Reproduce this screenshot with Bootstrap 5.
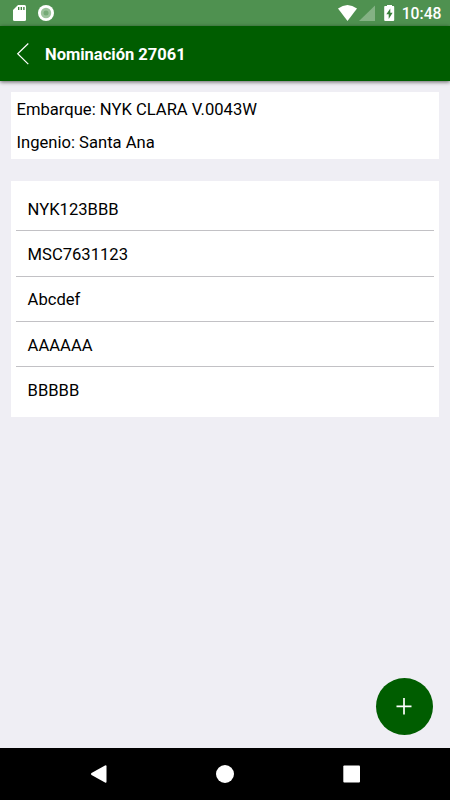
<!DOCTYPE html>
<html lang="es">
<head>
<meta charset="utf-8">
<meta name="viewport" content="width=device-width, initial-scale=1">
<title>Nominación 27061</title>
<link href="https://cdn.jsdelivr.net/npm/bootstrap@5.3.0/dist/css/bootstrap.min.css" rel="stylesheet">
<style>
body { font-family: Roboto, "Liberation Sans", sans-serif; font-size: 16.6px; line-height: 24px; color: #000; background: #efeef4; }
.screen { height: 800px; }
.status { height: 26px; background: #4f9150; color: #fff; }
.status-time { font-size: 15.7px; line-height: 28px; font-weight: 500; padding-right: 8.5px; }
.appbar { height: 55px; background: #005d00; color: #fff; box-shadow: 0 1px 4px rgba(0,0,0,.6); }
.title { font-size: 16.5px; font-weight: 700; line-height: 24px; padding-top: 2px; }
.content { padding: 11px; gap: 22px; }
.info { height: 67px; padding: 6px 5.5px; gap: 9.4px; }
.lines { height: 236px; padding: 5px 5.4px; }
.lines .list-group-item { height: 45.25px; padding: 11.800px 11.2px 0; border-color: #c2c1c5; color: #000; border-width: 0 0 1px; }
.lines .list-group-item:last-child { border-bottom: 0; }
.fab { width: 57px; height: 57px; right: 17.5px; bottom: 65px; background: #005d00; }
.navkeys { height: 52px; }
</style>
<script src="https://cdn.jsdelivr.net/npm/bootstrap@5.3.0/dist/js/bootstrap.bundle.min.js"></script>
</head>
<body>
<div class="screen position-relative d-flex flex-column overflow-hidden">
  <div class="status d-flex justify-content-between flex-shrink-0">
    <svg width="70" height="26" fill="#fff">
      <path d="M18 5h6.500q1.500 0 1.500 1.500V19.500q0 1.500-1.500 1.500h-10q-1.500 0-1.500-1.500V10z"/>
      <path d="M18.700 7v3M21.300 7v3M23.900 7v3" stroke="#388039" stroke-width="1.300"/>
      <circle cx="46" cy="13" r="8"/><circle cx="46" cy="13" r="5.200" fill="#9dc39d"/><circle cx="46" cy="13" r="2.500" fill="#76aa77"/>
    </svg>
    <div class="d-flex">
      <svg width="72" height="26" fill="#fff">
        <path d="M8 8.500Q17.500 1.500 27 8.500L17.500 21z"/>
        <path d="M45 5.500V21H29z" fill-opacity=".3"/>
        <path d="M55.500 6H57V5h5v1h1.500q.7 0 .7 1v13q0 1-1 1h-8q-1 0-1-1V7q0-1 .8-1z"/>
        <path d="M60.300 8.500l-4 5.700h2.400V19l3.900-6.200h-2.300z" fill="#388039"/>
      </svg>
      <span class="status-time">10:48</span>
    </div>
  </div>
  <header class="appbar d-flex align-items-center flex-shrink-0">
    <svg width="45" height="55" fill="none" stroke="#fff" stroke-width="1.200"><path d="M28.300 17.500L17.700 27.800l10.600 10.300"/></svg>
    <h1 class="title m-0">Nominación 27061</h1>
  </header>
  <main class="content d-flex flex-column flex-grow-1">
    <section class="info bg-white d-flex flex-column">
      <div>Embarque: NYK CLARA V.0043W</div>
      <div>Ingenio: Santa Ana</div>
    </section>
    <section class="lines bg-white">
      <ul class="list-group list-group-flush">
        <li class="list-group-item">NYK123BBB</li>
        <li class="list-group-item">MSC7631123</li>
        <li class="list-group-item">Abcdef</li>
        <li class="list-group-item">AAAAAA</li>
        <li class="list-group-item">BBBBB</li>
      </ul>
    </section>
  </main>
  <button class="fab position-absolute rounded-circle border-0 p-0 d-flex align-items-center justify-content-center" aria-label="Agregar">
    <svg width="16" height="18" stroke="#fff" stroke-width="1.700"><path d="M8 0v16.500M.5 8.300h15"/></svg>
  </button>
  <nav class="navkeys bg-black flex-shrink-0">
    <svg width="450" height="52" fill="#fff">
      <path d="M105 17.500q1.500-.8 1.500.8v15.400q0 1.600-1.500.8L91.500 27q-1.300-1 0-2z"/>
      <circle cx="225" cy="26" r="9"/><rect x="343.300" y="17.500" width="16.700" height="17" rx="1"/>
    </svg>
  </nav>
</div>
</body>
</html>
